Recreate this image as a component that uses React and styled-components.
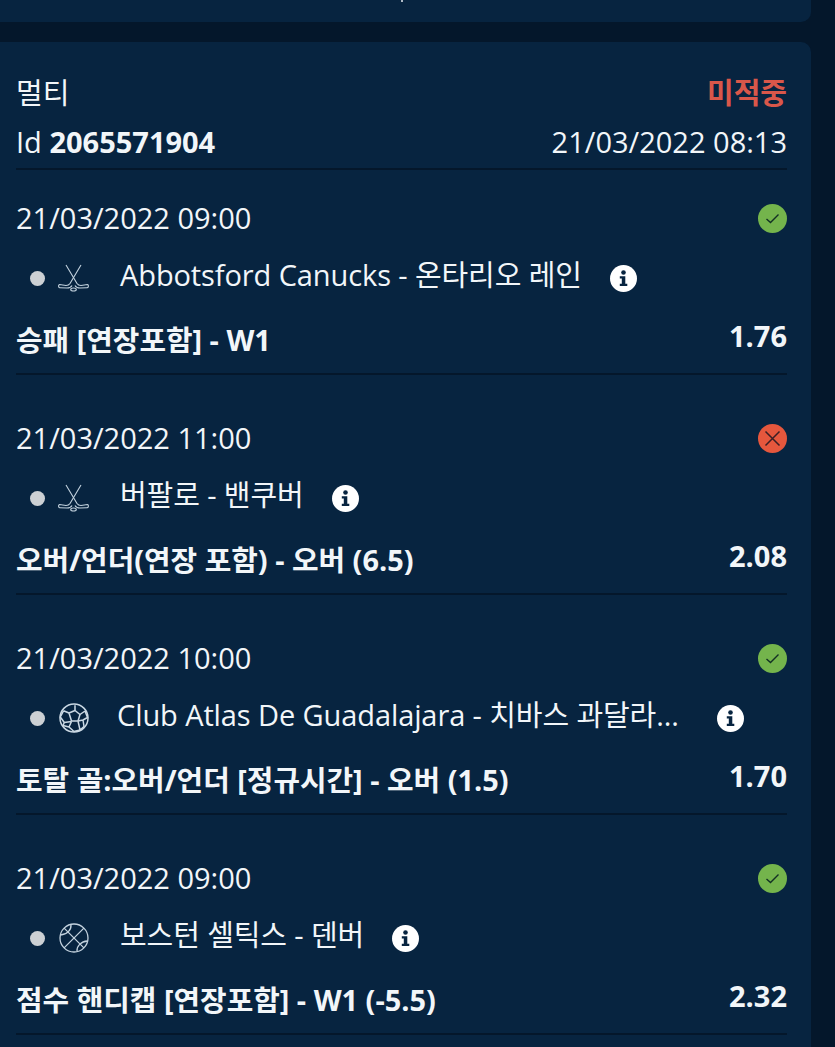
import React from "react";
import styled, { createGlobalStyle } from "styled-components";

const Global = createGlobalStyle`
  html, body { margin: 0; padding: 0; background: #04172b; }
  body { font-family: "Open Sans", "Noto Sans CJK KR", sans-serif; color: #f2f6f9; }
`;
const Page = styled.div`
  width: 835px; height: 1047px; overflow: hidden; background: #04172b;
  display: flex; flex-direction: column; gap: 20px;
`;
const TopCard = styled.div`
  width: 811px; height: 22px; flex: none; background: #072440; border-radius: 0 0 10px 0;
  display: flex; justify-content: center; overflow: hidden;
`;
const Tick = styled.span`
  width: 2px; height: 2px; margin-right: 8px; background: #e8eef3; border-radius: 1px;
`;
const Card = styled.section`
  width: 811px; flex: none; box-sizing: border-box; padding: 28px 24px 40px 16px;
  background: #072440; border-radius: 0 10px 0 0;
`;
const Line = styled.div`
  display: flex; justify-content: space-between; align-items: center;
`;
const Header = styled.header`
  height: 100px; box-sizing: border-box; border-bottom: 2px solid #04172b;
  display: flex; flex-direction: column;
`;
const Title = styled(Line)`height: 46px; font-size: 29px; line-height: 46px;`;
const Status = styled.span`color: #d9574a; font-weight: 700; font-size: 29px;`;
const Meta = styled(Line)`height: 40px; margin-top: 6px; font-size: 29px; line-height: 40px;`;
const Bold = styled.b`font-weight: 700;`;
const Row = styled.article`
  height: 220px; box-sizing: border-box; padding-top: 43px;
  border-bottom: 2px solid #04172b; display: flex; flex-direction: column;
  &:first-of-type { height: 205px; padding-top: 28px; }
`;
const DateLine = styled(Line)`height: 40px; font-size: 29px; line-height: 40px;`;
const Outcome = styled.span`
  width: 29px; height: 29px; border-radius: 50%; display: flex; align-items: center; justify-content: center;
  background: ${p => (p.$won ? "#74b44c" : "#e5573d")};
`;
const Match = styled.div`
  height: 40px; margin-top: 17px; display: flex; align-items: center; font-size: 29px; line-height: 40px; padding-left: 14px;
`;
const Dot = styled.span`
  width: 15px; height: 15px; border-radius: 50%; background: #ccd0d4; flex: none; margin-right: 13px; margin-top: 6px;
`;
const SportIcon = styled.svg`
  width: 32px; height: 32px; flex: none; margin-top: 6px; margin-right: ${p => p.$gap}px;
`;
const Teams = styled.span`
  white-space: nowrap; letter-spacing: -0.1px;
`;
const Info = styled.svg`
  width: 27px; height: 27px; flex: none; margin-left: ${p => p.$gap || 28}px; margin-top: 6px;
`;
const Market = styled(Line)`
  height: 40px; margin-top: 25px; font-weight: 700; font-size: 28.9px; line-height: 40px;
`;
const Odd = styled.span`font-size: 29px; position: relative; top: -4px;`;

const Check = () => (
  <svg width="17" height="17" viewBox="0 0 17 17" fill="none" stroke="#123024" strokeWidth="1.4">
    <path d="M2.5 9l4 3.5 8-8" />
  </svg>
);
const Cross = () => (
  <svg width="19" height="19" viewBox="0 0 19 19" fill="none" stroke="#3a1f25" strokeWidth="1.5">
    <path d="M2.5 2.5l14 14M16.500 2.5l-14 14" />
  </svg>
);
const Hockey = ({ gap }) => (
  <SportIcon $gap={gap} viewBox="0 0 32 32" fill="none" stroke="#c3d2de" strokeWidth="1.1" strokeLinejoin="round">
    <path d="M8 3L19 21.500 C20 23 21.500 23.500 23 23.500 L29.500 22.500 C31 23 30.500 25.800 29 25.800 L22 26 C19.500 26 18 25.500 17 23.500" />
    <path d="M23 3L12 21.500 C11 23 9.500 23.500 8 23.500 L1.500 22.500 C0 23 .5 25.800 2 25.800 L9 26 C11.500 26 13 25.500 14 23.500" />
    <ellipse cx="15.500" cy="27.500" rx="2.800" ry="1.500" />
  </SportIcon>
);
const Soccer = ({ gap }) => (
  <SportIcon $gap={gap} viewBox="0 0 32 32" fill="none" stroke="#cbd9e4" strokeWidth="1.5" strokeLinejoin="round">
    <circle cx="16" cy="16" r="14" />
    <path d="M11 11l6-2.500 5 4-2 6.500h-6.500z" />
    <path d="M17 8.500V3.200M22 12.500l5-3.500M27 9l2.500 6.500-4.500 2.500-5 1M25 18l1 6.500M13.500 19.500L11 25l5 4.500 6-1.500 4-3.500M11 25l-6-1.500M11 11L5.500 8.800M5.500 8.800L2.300 15l4 5.500-1.300 3M6.300 20.500L13.500 19.500M20 19l2 9" />
  </SportIcon>
);
const Basket = ({ gap }) => (
  <SportIcon $gap={gap} viewBox="0 0 32 32" fill="none" stroke="#c3d2de" strokeWidth="1.3">
    <circle cx="16" cy="16" r="14" />
    <path d="M6.100 6.100L25.900 25.900M25.900 6.100L6.100 25.900" />
    <path d="M13 2.500C13.500 8 9 12.500 2.500 13" />
    <path d="M19 29.500C18.500 24 23 19.500 29.500 19" />
  </SportIcon>
);
const InfoIcon = ({ gap }) => (
  <Info $gap={gap} viewBox="0 0 27 27">
    <circle cx="13.500" cy="13.500" r="13.500" fill="#fff" />
    <circle cx="13.500" cy="7.500" r="2.300" fill="#072440" />
    <path d="M9.800 11.300h5.500v7.400h2v2.300H9.800v-2.300h2v-5.100h-2z" fill="#072440" />
  </Info>
);

const bets = [
  { date: "21/03/2022 09:00", won: true, Icon: Hockey, gap: 30, teams: "Abbotsford Canucks - 온타리오 레인", market: "승패 [연장포함] - W1", odd: "1.76" },
  { date: "21/03/2022 11:00", won: false, Icon: Hockey, gap: 30, teams: "버팔로 - 밴쿠버", market: "오버/언더(연장 포함) - 오버 (6.5)", odd: "2.08" },
  { date: "21/03/2022 10:00", won: true, Icon: Soccer, gap: 27, teams: "Club Atlas De Guadalajara - 치바스 과달라...", infoGap: 38, market: "토탈 골:오버/언더 [정규시간] - 오버 (1.5)", odd: "1.70" },
  { date: "21/03/2022 09:00", won: true, Icon: Basket, gap: 30, teams: "보스턴 셀틱스 - 덴버", market: "점수 핸디캡 [연장포함] - W1 (-5.5)", odd: "2.32" },
];

export default function App() {
  return (
    <Page>
      <Global />
      <TopCard><Tick /></TopCard>
      <Card>
        <Header>
          <Title><span>멀티</span><Status>미적중</Status></Title>
          <Meta><span>Id <Bold>2065571904</Bold></span><span>21/03/2022 08:13</span></Meta>
        </Header>
        {bets.map((b, i) => (
          <Row key={i}>
            <DateLine>
              <span>{b.date}</span>
              <Outcome $won={b.won}>{b.won ? <Check /> : <Cross />}</Outcome>
            </DateLine>
            <Match>
              <Dot />
              <b.Icon gap={b.gap} />
              <Teams>{b.teams}</Teams>
              <InfoIcon gap={b.infoGap} />
            </Match>
            <Market><span>{b.market}</span><Odd>{b.odd}</Odd></Market>
          </Row>
        ))}
      </Card>
    </Page>
  );
}
